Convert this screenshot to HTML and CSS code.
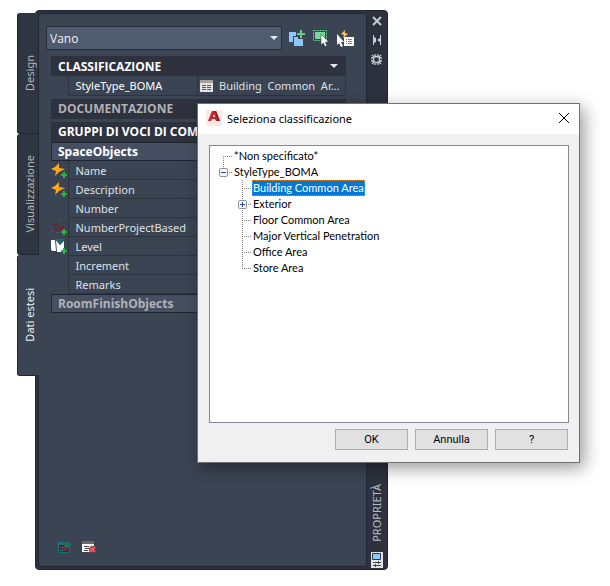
FILE: index.html
```html
<!DOCTYPE html>
<html lang="it">
<head>
    <meta charset="UTF-8">
    <meta name="viewport" content="width=device-width, initial-scale=1.0">
    <title>Seleziona classificazione</title>
    <link rel="stylesheet" href="styles.css">
</head>
<body>
    <nav class="side-tabs">
        <button class="side-tab"><span>Design</span></button>
        <button class="side-tab"><span>Visualizzazione</span></button>
        <button class="side-tab active"><span>Dati estesi</span></button>
    </nav>

    <main class="palette">
        <section class="panel">
            <div class="toolbar">
                <select class="type-select" aria-label="Tipo di oggetto">
                    <option>Vano</option>
                </select>
                <button class="tool-btn" aria-label="Aggiungi">
                    <svg width="17" height="17" viewBox="0 0 17 17">
                        <path fill="#8cc8fa" d="M0 2h7v4H4v6H0zM5 7h4v2h5v7H5z"/>
                        <path fill="#5fd08a" d="M11 0h2v3h3v2h-3v3h-2V5H8V3h3z"/>
                    </svg>
                </button>
                <button class="tool-btn" aria-label="Seleziona oggetti">
                    <svg width="17" height="17" viewBox="0 0 17 17">
                        <rect x=".5" y=".5" width="13" height="10" fill="none" stroke="#5fd08a" stroke-dasharray="2 1"/>
                        <rect x="2" y="2" width="10" height="7" fill="#7ad89c"/>
                        <path fill="#fff" stroke="#3b4453" stroke-width=".6" d="M8 4v11l2.300-2 1.700 3.500 2-1-1.700-3.300 3.200-.4z"/>
                    </svg>
                </button>
                <button class="tool-btn" aria-label="Selezione rapida">
                    <svg width="17" height="17" viewBox="0 0 17 17">
                        <path fill="#fff" d="M0 4v11l2-2 2 4 2-1-2-4h3z"/>
                        <path fill="#ffc14d" d="M8 0L4 4l3 1-1 3 5-4-3-1z"/>
                        <path fill="#fff" d="M7 7h10v9H7z"/>
                        <path stroke="#2f8fdc" d="M9 9.500h1M11 9.500h4M9 11.500h1M11 11.500h4M9 13.500h1M11 13.500h4"/>
                    </svg>
                </button>
            </div>

            <div class="properties">
                <button class="section-title">
                    CLASSIFICAZIONE
                    <svg width="8" height="5" viewBox="0 0 8 5"><path fill="#e6e8ec" d="M0 0h8L4 4z"/></svg>
                </button>
                <table class="prop-table">
                    <tr>
                        <td class="icon-cell"></td>
                        <th scope="row" class="bright">StyleType_BOMA</th>
                        <td>
                            <button class="value-btn">
                                <svg width="13" height="12" viewBox="0 0 13 12">
                                    <path fill="#e4e4e4" d="M0 0h13v12H0z"/>
                                    <path fill="#a5a09c" d="M0 0h13v3H0z"/>
                                    <path stroke="#555" d="M2 5.500h4M7 5.500h4M2 7.500h4M7 7.500h4M2 9.500h4M7 9.500h4"/>
                                </svg>
                                <span>Building&nbsp; Common&nbsp; Ar...</span>
                            </button>
                        </td>
                    </tr>
                </table>

                <button class="section-title dim">DOCUMENTAZIONE</button>

                <button class="section-title">GRUPPI DI VOCI DI COM</button>
                <button class="group-title">SpaceObjects</button>
                <table class="prop-table">
                    <tr>
                        <td class="icon-cell">
                            <svg width="17" height="16" viewBox="0 0 17 16"><path fill="#ffa71a" d="M8 0L4 4 0 6l5 2-1 5 4-4 6-3-6-1z"/><path fill="#2fb344" d="M12 9h2v2h2v2h-2v2h-2v-2h-2v-2h2z"/></svg>
                        </td>
                        <th scope="row">Name</th>
                        <td></td>
                    </tr>
                    <tr>
                        <td class="icon-cell">
                            <svg width="17" height="16" viewBox="0 0 17 16"><path fill="#ffa71a" d="M8 0L4 4 0 6l5 2-1 5 4-4 6-3-6-1z"/><path fill="#2fb344" d="M12 9h2v2h2v2h-2v2h-2v-2h-2v-2h2z"/></svg>
                        </td>
                        <th scope="row">Description</th>
                        <td></td>
                    </tr>
                    <tr>
                        <td class="icon-cell"></td>
                        <th scope="row">Number</th>
                        <td></td>
                    </tr>
                    <tr>
                        <td class="icon-cell">
                            <svg width="17" height="16" viewBox="0 0 17 16"><path fill="none" stroke="#7b1c24" stroke-width="1.200" d="M9 1c-4-1-3 5-5 9-1 2-2 2-3 1M2 5h5M7 7l-1 5M8 6c2 0 0 5 2 5l2-5v3"/><path stroke="#1d6a70" d="M7 .5h2M0 11.500h3M5 12.500h3"/><path fill="#2fb344" d="M12 9h2v2h2v2h-2v2h-2v-2h-2v-2h2z"/></svg>
                        </td>
                        <th scope="row">NumberProjectBased</th>
                        <td></td>
                    </tr>
                    <tr>
                        <td class="icon-cell">
                            <svg width="17" height="16" viewBox="0 0 17 16"><path fill="#fff" d="M0 1h4l1 11H2L0 11zM5 1l4 5 4-4v11H6z"/><path fill="#1d6a70" d="M4 0h10L9 6z"/><path fill="#2fb344" d="M12 9h2v2h2v2h-2v2h-2v-2h-2v-2h2z"/></svg>
                        </td>
                        <th scope="row">Level</th>
                        <td></td>
                    </tr>
                    <tr>
                        <td class="icon-cell"></td>
                        <th scope="row">Increment</th>
                        <td></td>
                    </tr>
                    <tr>
                        <td class="icon-cell"></td>
                        <th scope="row">Remarks</th>
                        <td></td>
                    </tr>
                </table>
                <button class="group-title dim">RoomFinishObjects</button>
            </div>

            <div class="panel-footer">
                <button class="tool-btn" aria-label="Aggiungi gruppo">
                    <svg width="14" height="13" viewBox="0 0 14 13">
                        <path fill="#5c1f2b" stroke="#14747c" d="M.5 2.500h11v9H.5z"/>
                        <path fill="#14747c" d="M0 1h6v3H0z"/>
                        <path stroke="#14747c" d="M2 6.500h5M4 8.500h5M2 9.500h3"/>
                        <path fill="#0f7d5c" d="M9 0l1 2 2-1-1 2 3 1-3 1 1 2-2-1-1 2-1-2-2 1 1-2-2-1 2-1-1-2 2 1z"/>
                    </svg>
                </button>
                <button class="tool-btn" aria-label="Rimuovi gruppo">
                    <svg width="14" height="13" viewBox="0 0 14 13">
                        <path fill="#fff" d="M0 2h12v9H0z"/>
                        <path fill="#6b6664" d="M0 0h12v3H0z"/>
                        <path stroke="#444" d="M2 5.500h5M3 7.500h4M2 9.500h4"/>
                        <path stroke="#3b4453" stroke-width="4" d="M8 6l5 5M13 6l-5 5"/>
                        <path stroke="#ff5560" stroke-width="2" d="M8 6l5 5M13 6l-5 5"/>
                    </svg>
                </button>
            </div>
        </section>

        <header class="title-strip">
            <button class="strip-btn" aria-label="Chiudi">
                <svg width="10" height="10" viewBox="0 0 10 10"><path stroke="#c9ccd2" stroke-width="2" d="M1 1l8 8M9 1L1 9"/></svg>
            </button>
            <button class="strip-btn" aria-label="Nascondi automaticamente">
                <svg width="10" height="10" viewBox="0 0 10 10"><path fill="#c9ccd2" d="M1 0h1v2l2 1v4L2 8v2H1zM8 0h1v10H8V7L5 5l3-2z"/></svg>
            </button>
            <button class="strip-btn" aria-label="Proprietà">
                <svg width="11" height="11" viewBox="0 0 11 11"><circle cx="5.500" cy="5.500" r="3" fill="none" stroke="#c9ccd2" stroke-width="1.300"/><path stroke="#c9ccd2" stroke-width="1.300" d="M4 0v2.500M7 0v2.500M4 8.500V11M7 8.500V11M0 4h2.500M0 7h2.500M8.500 4H11M8.500 7H11M1 1l2 2M10 1L8 3M1 10l2-2M10 10L8 8"/></svg>
            </button>
            <h1 class="strip-title">PROPRIETÀ</h1>
            <svg width="12" height="16" viewBox="0 0 12 16">
                <path fill="#e3e3e3" d="M0 0h12v16H0z"/>
                <path fill="#8cc8fa" stroke="#333a47" d="M1.500 1.500h8v6h-8z"/>
                <path stroke="#444" d="M2 10.500h8M2 13.500h8M7.500 9v3M4.500 12v3"/>
            </svg>
        </header>
    </main>

    <div class="dialog" role="dialog" aria-labelledby="dialogTitle">
        <div class="dialog-bar">
            <svg width="16" height="16" viewBox="0 0 16 16">
                <path fill="#fbe9e4" d="M0 0h16v16H0z"/>
                <path fill="#c1272d" fill-rule="evenodd" d="M6 1h4l4 10h-4l-1-2H6l-1 2H2zM8 4L7 7h2z"/>
                <path fill="#8d1b20" d="M9 1h1l4 10h-2z"/>
            </svg>
            <h2 class="dialog-title" id="dialogTitle">Seleziona classificazione</h2>
            <button class="dialog-close" aria-label="Chiudi">
                <svg width="10" height="10" viewBox="0 0 10 10"><path stroke="#000" d="M0 0l10 10M10 0L0 10"/></svg>
            </button>
        </div>

        <ul class="tree">
            <li class="tree-row first"><span class="branch"></span><button class="label">*Non specificato*</button></li>
            <li>
                <div class="tree-row last">
                    <span class="branch">
                        <svg width="9" height="9" viewBox="0 0 9 9"><rect x=".5" y=".5" width="8" height="8" rx="1" fill="#f4f4f4" stroke="#919191"/><path stroke="#2b4a94" d="M2 4.500h5"/></svg>
                    </span><button class="label">StyleType_BOMA</button>
                </div>
                <ul class="subtree">
                    <li class="tree-row"><span class="branch"></span><button class="label selected">Building Common Area</button></li>
                    <li class="tree-row">
                        <span class="branch">
                            <svg width="9" height="9" viewBox="0 0 9 9"><rect x=".5" y=".5" width="8" height="8" rx="1" fill="#f4f4f4" stroke="#919191"/><path stroke="#2b4a94" d="M2 4.500h5M4.500 2v5"/></svg>
                        </span><button class="label">Exterior</button>
                    </li>
                    <li class="tree-row"><span class="branch"></span><button class="label">Floor Common Area</button></li>
                    <li class="tree-row"><span class="branch"></span><button class="label">Major Vertical Penetration</button></li>
                    <li class="tree-row"><span class="branch"></span><button class="label">Office Area</button></li>
                    <li class="tree-row last"><span class="branch"></span><button class="label">Store Area</button></li>
                </ul>
            </li>
        </ul>

        <div class="dialog-actions">
            <button class="dialog-btn">OK</button>
            <button class="dialog-btn">Annulla</button>
            <button class="dialog-btn">?</button>
        </div>
    </div>
</body>
</html>
```
FILE: styles.css
```css
* {
    margin: 0;
    padding: 0;
    box-sizing: border-box;
}

body {
    font-family: "Noto Sans", "Open Sans", sans-serif;
    font-size: 11px;
    background: #fff;
    color: #dfe1e5;
    min-height: 100vh;
    display: flex;
    align-items: stretch;
    padding: 10px 0 16px 17px;
    position: relative;
}

button {
    font: inherit;
    color: inherit;
    background: none;
    border: none;
    cursor: pointer;
}

svg {
    display: block;
    flex: none;
}

ul {
    list-style: none;
}

/* vertical tabs */
.side-tabs {
    display: flex;
    flex-direction: column;
    align-self: flex-start;
    margin: 3px -4px 0 0;
    z-index: 1;
}

.side-tab {
    width: 22px;
    height: 121px;
    padding-left: 3px;
    background: #2f3541;
    border: 1px solid #202733;
    border-top-width: 0;
    border-radius: 3px 0 0 3px;
    color: #b4b7bd;
    display: flex;
    align-items: center;
    justify-content: center;
}

.side-tab span {
    writing-mode: vertical-rl;
    transform: rotate(180deg);
    line-height: 16px;
}

.side-tab.active {
    background: #3b4453;
    border-right-color: #3b4453;
    color: #f2f3f5;
}

/* palette */
.palette {
    width: 59.500%;
    display: flex;
    background: #2d323e;
    border: 1px solid #202733;
    border-radius: 4px;
}

.panel {
    flex: 1;
    min-width: 0;
    display: flex;
    flex-direction: column;
    background: #3b4453;
    border: 1px solid #202733;
    border-radius: 3px;
    margin: 2px 0 2px 2px;
    padding: 12px 12px 12px 7px;
}

.toolbar {
    display: flex;
    align-items: center;
    gap: 7px;
}

.type-select {
    flex: 1;
    min-width: 0;
    height: 24px;
    padding: 0 3px;
    font-family: "Open Sans", "Noto Sans", sans-serif;
    font-size: 12px;
    color: #f0f1f3;
    appearance: none;
    border: 1px solid #262d39;
    background: #4f5b6f url("data:image/svg+xml,%3Csvg xmlns='http://www.w3.org/2000/svg' width='8' height='4'%3E%3Cpath fill='%23e6e8ec' d='M0 0h8L4 4z'/%3E%3C/svg%3E") no-repeat right 3px center;
}

.properties {
    margin: 6px 8px 0 5px;
}

.section-title,
.group-title {
    width: 100%;
    height: 20px;
    display: flex;
    align-items: center;
    justify-content: space-between;
    background: #2d323e;
    color: #fff;
    font-family: "Open Sans", "Noto Sans", sans-serif;
    font-size: 12px;
    font-weight: bold;
    padding: 0 8px 0 7px;
    white-space: nowrap;
}

.group-title {
    height: 19px;
    background: #464f62;
    border: 1px solid #202733;
    padding: 0 6px;
}

.dim {
    color: #b0b2b6;
}

.prop-table {
    width: 100%;
    table-layout: fixed;
    border-collapse: collapse;
}

.prop-table + .section-title,
.section-title.dim + .section-title {
    margin-top: 3px;
}

.prop-table tr {
    height: 19px;
}

.prop-table th,
.prop-table td {
    height: 19px;
    padding-top: 2px;
    line-height: 16px;
    border: 1px solid #2d333f;
    border-top: none;
    overflow: hidden;
}

.prop-table th {
    width: 44%;
    padding-left: 7px;
    text-align: left;
    font-weight: normal;
}

.prop-table .bright {
    color: #fff;
}

.prop-table .icon-cell {
    width: 17px;
    border: none;
}

.value-btn {
    display: flex;
    align-items: center;
    gap: 6px;
    height: 16px;
    padding-left: 2px;
    white-space: nowrap;
}

.panel-footer {
    display: flex;
    gap: 10px;
    margin-top: auto;
    padding-left: 12px;
}

/* right strip */
.title-strip {
    width: 20px;
    display: flex;
    flex-direction: column;
    align-items: center;
    gap: 9px;
    padding: 5px 0 1px;
}

.strip-title {
    font-size: 11px;
    font-weight: normal;
    line-height: 14px;
    color: #b9bcc2;
    writing-mode: vertical-rl;
    transform: rotate(180deg);
    margin: auto 0 1px;
}

/* dialog */
.dialog {
    position: absolute;
    top: 103px;
    right: 30px;
    bottom: 123px;
    left: 197px;
    display: flex;
    flex-direction: column;
    background: #f0f0f0;
    border: 1px solid #6f7176;
    box-shadow: 4px 5px 16px rgba(0, 0, 0, 0.4);
    color: #000;
}

.dialog-bar {
    height: 30px;
    display: flex;
    align-items: center;
    gap: 5px;
    padding: 0 10px 2px 8px;
    background: #fff;
}

.dialog-title {
    flex: 1;
    font-size: 11px;
    font-weight: normal;
}

.tree {
    flex: 1;
    margin: 11px 10px 6px 11px;
    padding: 2px 4px;
    background: #fff;
    border: 1px solid #828790;
    font-family: Lato, "Noto Sans", sans-serif;
    font-size: 11px;
}

.subtree {
    padding-left: 19px;
}

.tree-row {
    display: flex;
    height: 16px;
}

.branch {
    width: 19px;
    display: flex;
    align-items: center;
    padding-left: 5px;
    background:
        repeating-linear-gradient(to right, #808080 0 1px, transparent 1px 2px) 9px 8px / 9px 1px no-repeat,
        repeating-linear-gradient(to bottom, #808080 0 1px, transparent 1px 2px) 9px 0 / 1px 16px no-repeat;
}

.first .branch {
    background-position: 9px 8px, 9px 8px;
}

.last .branch {
    background-size: 9px 1px, 1px 8px;
}

.label {
    padding: 0 1px;
    line-height: 16px;
    white-space: nowrap;
}

.label.selected {
    background: #0078d7;
    color: #fff;
    outline: 1px dotted #e08a30;
    outline-offset: -1px;
}

.dialog-actions {
    display: flex;
    justify-content: flex-end;
    gap: 7px;
    padding: 0 11px 12px;
}

.dialog-btn {
    width: 73px;
    height: 21px;
    background: #e1e1e1;
    border: 1px solid #adadad;
    font-family: Roboto, "Noto Sans", sans-serif;
    font-size: 11px;
}
```
